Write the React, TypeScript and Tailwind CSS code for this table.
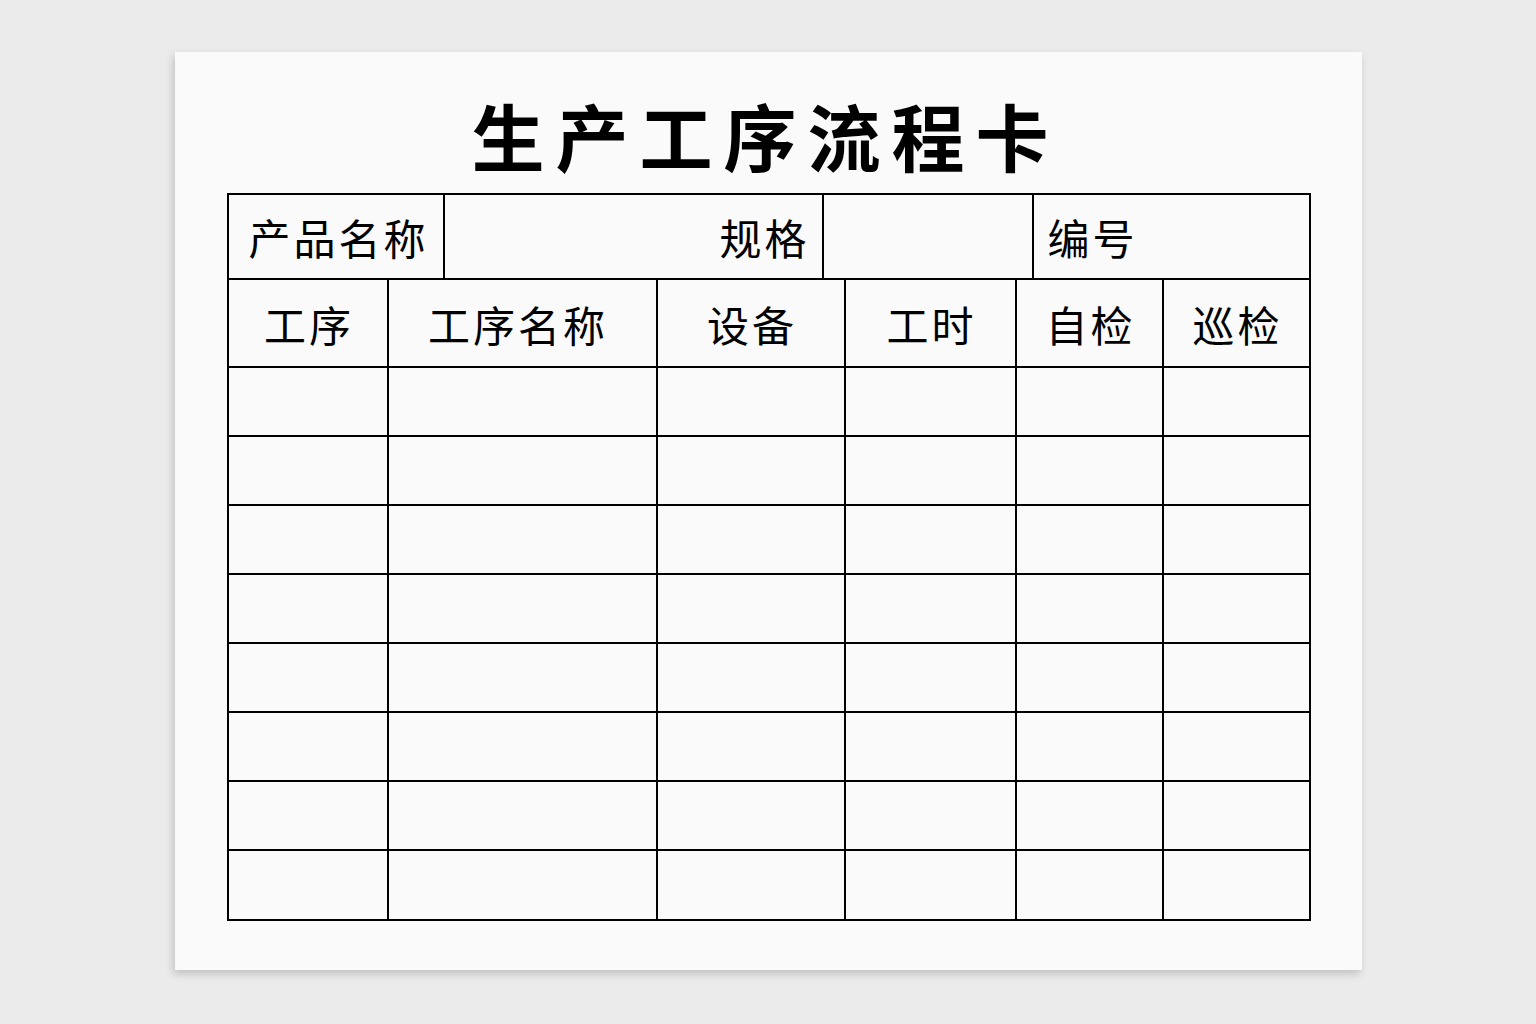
import React from "react";

const headers = [
  { label: "工序", w: "w-[160px]", pad: "pl-[3px]" },
  { label: "工序名称", w: "w-[269px]", pad: "pr-[8px]" },
  { label: "设备", w: "w-[188px]", pad: "pl-[3px]" },
  { label: "工时", w: "w-[171px]", pad: "pl-[3px]" },
  { label: "自检", w: "w-[147px]", pad: "pl-[3px]" },
  { label: "巡检", w: "flex-1", pad: "pl-[3px]" },
];

const rows = Array.from({ length: 8 });

export default function App() {
  return (
    <div
      className="min-h-screen w-full bg-[#ebebeb] pt-[52px]"
      style={{ fontFamily: '"Noto Sans CJK SC", "Noto Sans", sans-serif' }}
    >
      <div className="mx-auto w-[1187px] h-[918px] bg-[#fafafa] pl-[52px] pr-[51px] pt-[34px] shadow-[-2px_4px_8px_rgba(0,0,0,0.18)]">
        {/* Title */}
        <h1 className="h-[96px] flex items-center justify-center text-[73px] leading-none font-bold tracking-[11px] text-black pr-[6px]">
          生产工序流程卡
        </h1>

        {/* Table */}
        <div className="mt-[11px] border-2 border-black text-black">
          {/* Product row */}
          <div className="flex h-[85px] border-b-2 border-black text-[42px] tracking-[3px]">
            <div className="w-[216px] border-r-2 border-black flex items-center pl-[20px]">
              产品名称
            </div>
            <div className="w-[379px] border-r-2 border-black flex items-center justify-end pr-[12px]">
              规格
            </div>
            <div className="w-[210px] border-r-2 border-black" />
            <div className="flex-1 flex items-center pl-[14px]">编号</div>
          </div>

          {/* Header row */}
          <div className="flex h-[88px] border-b-2 border-black text-[42px] tracking-[3px]">
            {headers.map((h, i) => (
              <div
                key={h.label}
                className={`${h.w} flex items-center justify-center ${h.pad} ${
                  i < headers.length - 1 ? "border-r-2 border-black" : ""
                }`}
              >
                {h.label}
              </div>
            ))}
          </div>

          {/* Empty rows */}
          {rows.map((_, r) => (
            <div
              key={r}
              className={`flex ${
                r < rows.length - 1 ? "h-[69px] border-b-2 border-black" : "h-[68px]"
              }`}
            >
              {headers.map((h, i) => (
                <div
                  key={h.label}
                  className={`${h.w} ${
                    i < headers.length - 1 ? "border-r-2 border-black" : ""
                  }`}
                />
              ))}
            </div>
          ))}
        </div>
      </div>
    </div>
  );
}
